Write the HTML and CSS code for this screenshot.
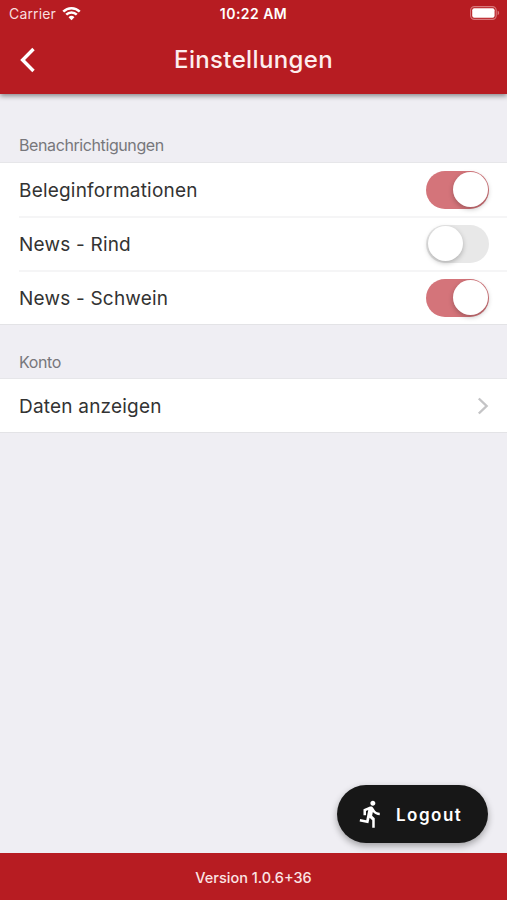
FILE: index.html
```html
<!DOCTYPE html>
<html lang="de">
<head>
    <meta charset="UTF-8">
    <meta name="viewport" content="width=device-width, initial-scale=1.0">
    <title>Einstellungen</title>
    <link rel="stylesheet" href="styles.css">
</head>
<body>
    <header>
        <div class="status">
            <div class="carrier">
                <span>Carrier</span>
                <svg class="wifi" viewBox="0 0 18 14" width="19" height="15">
                    <path d="M1.2 5.2a11 11 0 0 1 15.6 0M4 8.1a7.1 7.1 0 0 1 10 0" fill="none" stroke="#fff" stroke-width="2.4"/>
                    <path d="M9 13.4L6.2 10.6a4 4 0 0 1 5.6 0z" fill="#fff"/>
                </svg>
            </div>
            <span class="time">10:22 AM</span>
            <svg class="battery" viewBox="0 0 30 14" width="30" height="14">
                <rect x=".6" y=".6" width="25.6" height="12.8" rx="3.8" fill="none" stroke="#d9787c" stroke-width="1.1"/>
                <rect x="2.2" y="2.2" width="22.4" height="9.6" rx="2" fill="#fff"/>
                <path d="M27.6 4.8c2 .6 2 3.8 0 4.4z" fill="#d9787c"/>
            </svg>
        </div>
        <div class="titleBar">
            <svg class="back" viewBox="0 0 16 26" width="16" height="26">
                <path d="M13.5 2L2.6 13l10.9 11" fill="none" stroke="#fff" stroke-width="3.4"/>
            </svg>
            <h1>Einstellungen</h1>
        </div>
    </header>

    <main>
        <h2>Benachrichtigungen</h2>
        <ul class="list">
            <li><span>Beleginformationen</span><div class="switch on"></div></li>
            <li><span>News - Rind</span><div class="switch"></div></li>
            <li><span>News - Schwein</span><div class="switch on"></div></li>
        </ul>
        <h2 class="konto">Konto</h2>
        <ul class="list">
            <li>
                <span>Daten anzeigen</span>
                <svg class="arrow" viewBox="0 0 12 18" width="12" height="18">
                    <path d="M1.8 1.5L9.6 9l-7.8 7.5" fill="none" stroke="#c4c4c6" stroke-width="2.4"/>
                </svg>
            </li>
        </ul>
        <button class="logout">
            <svg viewBox="0 0 24 24" width="30" height="30">
                <path fill="#fff" d="M13.49 5.48c1.1 0 2-.9 2-2s-.9-2-2-2-2 .9-2 2 .9 2 2 2zm-3.6 13.9l1-4.4 2.1 2v6h2v-7.5l-2.1-2 .6-3c1.3 1.5 3.3 2.5 5.5 2.5v-2c-1.9 0-3.5-1-4.3-2.4l-1-1.6c-.4-.6-1-1-1.7-1-.3 0-.5.1-.8.1l-5.2 2.2v4.7h2v-3.4l1.8-.7-1.6 8.1-4.9-1-.4 2 7 1.4z"/>
            </svg>
            <span>Logout</span>
        </button>
    </main>

    <footer>Version 1.0.6+36</footer>
</body>
</html>
```

FILE: styles.css
```css
* {
    box-sizing: border-box;
}
body {
    margin: 0;
    height: 900px;
    display: flex;
    flex-direction: column;
    overflow: hidden;
    background-color: #efeef3;
    font-family: Inter, "Liberation Sans", sans-serif;
    color: #333;
}
header {
    height: 94px;
    flex: none;
    background-color: #b71c22;
    color: #fff;
    box-shadow: 0 2px 5px #00000070;
    z-index: 1;
}
.status {
    display: grid;
    grid-template-columns: 1fr auto 1fr;
    align-items: center;
    height: 26px;
    padding: 0 7px 0 9px;
    font-size: 14px;
}
.carrier {
    display: flex;
    align-items: center;
    gap: 6px;
    letter-spacing: 0.15px;
    color: #f8dedf;
}
.time {
    margin-right: 2px;
    font-size: 14px;
    font-weight: 600;
    letter-spacing: 0.45px;
}
.battery {
    justify-self: end;
}
.titleBar {
    display: grid;
    grid-template-columns: 60px 1fr 60px;
    align-items: center;
    height: 67px;
}
.back {
    margin-left: 20px;
}
h1 {
    margin: 0;
    text-align: center;
    font-size: 24px;
    font-weight: 500;
    letter-spacing: 0.35px;
    color: #fdeeee;
}
main {
    flex: 1;
    position: relative;
    padding-top: 41px;
}
h2 {
    margin: 0;
    padding: 0 19px;
    height: 27px;
    line-height: 20px;
    font-size: 16px;
    font-weight: 400;
    letter-spacing: -0.4px;
    color: #77777b;
}
.konto {
    margin-top: 26px;
    line-height: 22px;
}
.list {
    margin: 0;
    padding: 0 0 0 19px;
    list-style: none;
    background-color: #fff;
    border-top: 1px solid #e6e6e9;
    border-bottom: 1px solid #e3e3e6;
}
.list li {
    display: flex;
    justify-content: space-between;
    align-items: center;
    height: 53px;
    padding-right: 18px;
    font-size: 19px;
    letter-spacing: 0.2px;
}
.list li span {
    padding-top: 1px;
}
.list li + li {
    height: 54px;
    padding-bottom: 1px;
    border-top: 2px solid #f5f5f6;
}
.switch {
    width: 63px;
    height: 38px;
    padding: 1.5px;
    display: flex;
    border-radius: 19px;
    background-color: #e8e8e8;
}
.switch::before {
    content: "";
    width: 35px;
    height: 35px;
    border-radius: 50%;
    background-color: #fff;
    box-shadow: 0 2px 5px #00000040;
}
.switch.on {
    justify-content: flex-end;
    background-color: #d4747a;
}
.logout {
    position: absolute;
    right: 19px;
    bottom: 10px;
    display: flex;
    align-items: center;
    gap: 9px;
    width: 151px;
    height: 58px;
    padding: 0 0 0 20px;
    border: none;
    border-radius: 29px;
    background-color: #171717;
    color: #fff;
    font-family: inherit;
    font-size: 17px;
    font-weight: 600;
    letter-spacing: 1.5px;
    box-shadow: 0 3px 7px #00000055;
}
.logout svg {
    margin-left: -1px;
    margin-right: 1px;
}
.logout span {
    padding-top: 1px;
}
footer {
    flex: none;
    height: 47px;
    line-height: 49px;
    text-align: center;
    background-color: #b71c22;
    color: #fbe4e4;
    font-size: 14.5px;
    font-weight: 500;
}
```
